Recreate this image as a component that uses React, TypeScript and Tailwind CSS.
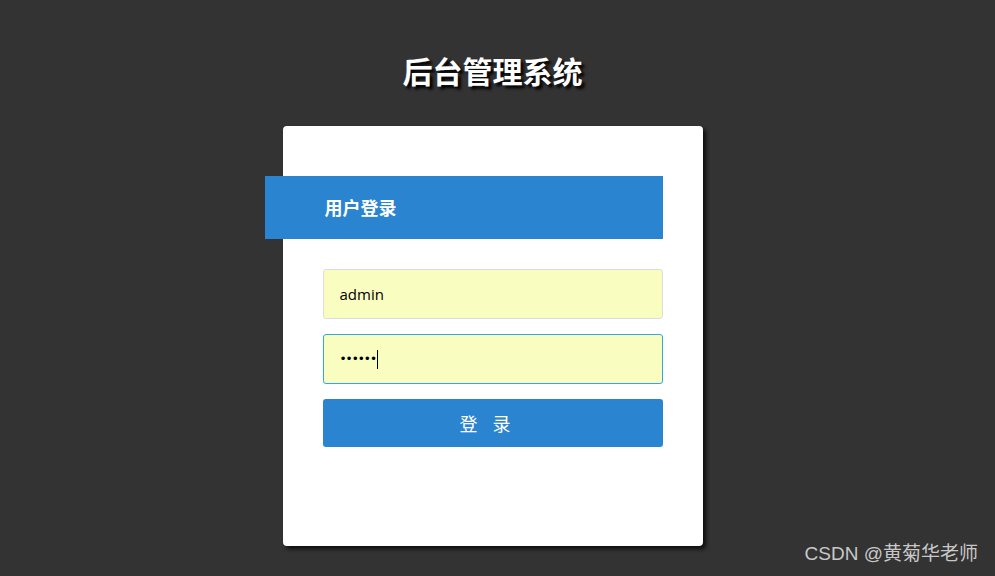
import React from 'react';

const cjk = '"Noto Sans CJK SC", "Noto Sans", sans-serif';

export default function App() {
  return (
    <div className="relative min-h-screen w-full bg-[#333333] flex flex-col items-center pr-[10px]" style={{ fontFamily: cjk }}>
      {/* Page title */}
      <h1 className="mt-[50px] text-[30px] leading-[40px] font-bold text-white [text-shadow:3px_3px_3px_#000]">
        后台管理系统
      </h1>
      {/* Login card */}
      <div className="mt-[36px] w-[420px] h-[420px] bg-white rounded-[4px] shadow-[3px_3px_4px_rgba(0,0,0,0.75)] pt-[50px]">
        <div className="-ml-[18px] w-[398px] h-[63px] bg-[#2a84cf] pl-[60px] flex items-center">
          <span className="text-white text-[18px] font-bold">用户登录</span>
        </div>
        <div className="mx-[40px] mt-[30px] flex flex-col gap-[15px]">
          <input
            readOnly
            value="admin"
            className="h-[50px] w-full rounded-[3px] border border-[#dddddd] bg-[#fafdc0] px-[16px] text-[15px] text-black outline-none"
            style={{ fontFamily: '"Open Sans", "Noto Sans", sans-serif' }}
          />
          <div className="relative">
            <input
              readOnly
              type="password"
              value="123456"
              className="h-[50px] w-full rounded-[3px] border border-[#2fa8e6] bg-[#fafdc0] px-[16px] text-[12px] text-black outline-none tracking-[-1px]"
              style={{ fontFamily: '"DejaVu Sans", sans-serif' }}
            />
            <span className="absolute left-[54px] top-[16px] w-px h-[19px] bg-black" />
          </div>
          <button className="h-[48px] w-full rounded-[3px] bg-[#2a84cf] text-white text-[18px] tracking-[15px]">
            登录
          </button>
        </div>
      </div>
      {/* Watermark */}
      <div className="absolute right-[17px] bottom-[8px] text-[19px] text-[#c8c8c8]" style={{ fontFamily: '"Liberation Sans", "Noto Sans CJK SC", sans-serif' }}>
        CSDN @黄菊华老师
      </div>
    </div>
  );
}
